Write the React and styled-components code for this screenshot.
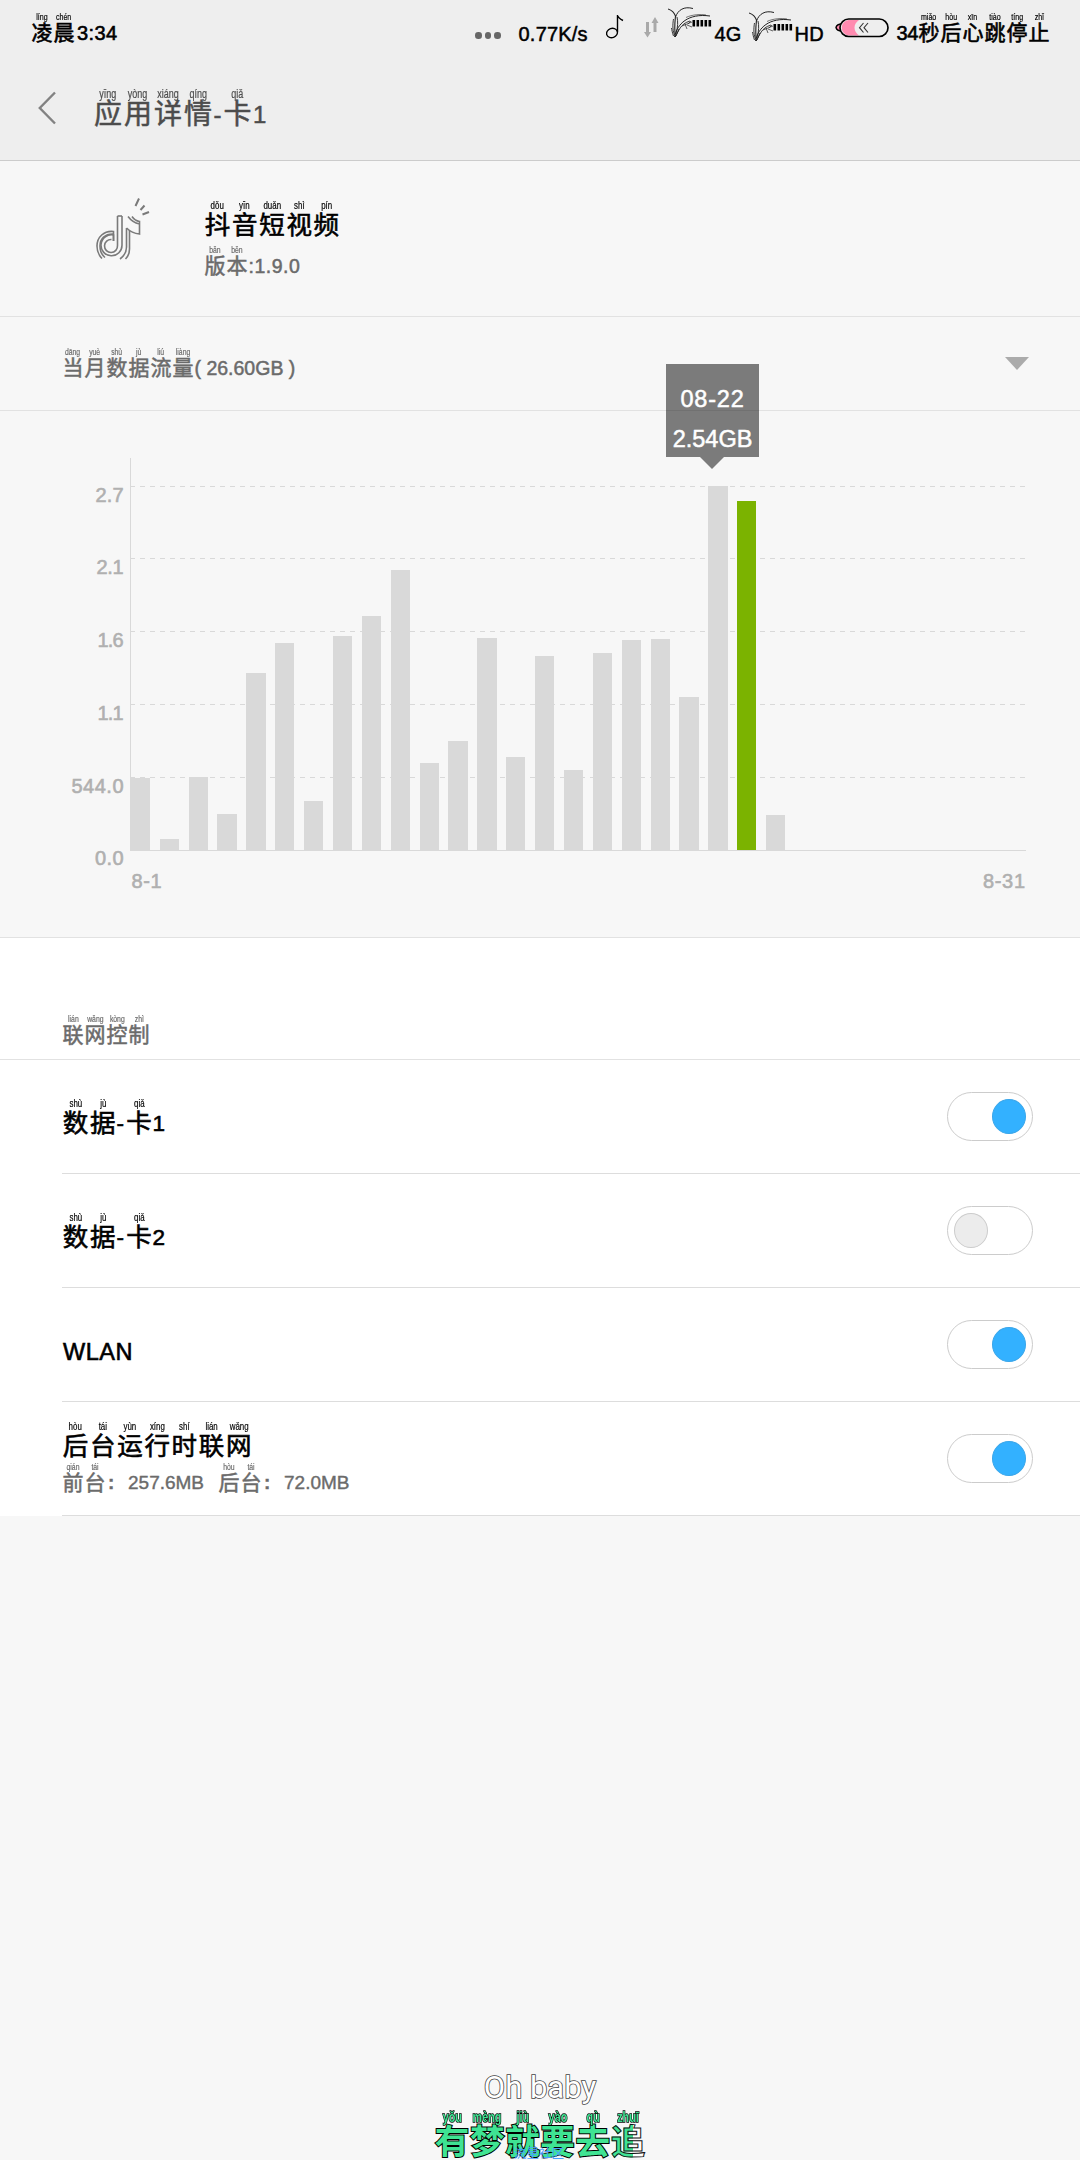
import React, {useState} from 'react';
import styled, {createGlobalStyle} from 'styled-components';

const usage = [72,11,73,36,177,207,49,214,234,280,87,109,212,93,194,80,197,210,211,153,364,349,35];
const selectedDay = 21;

const levels = [
    {y: 75, label: '2.7', width: 28},
    {y: 147, label: '2.1', width: 27},
    {y: 220, label: '1.6', width: 26},
    {y: 293, label: '1.1', width: 26},
    {y: 366, label: '544.0', width: 52},
];

// a string is plain latin text, a pair is [character, pinyin]
const Pinyin = ({text, ...style}) => (
    <Line>
        {text.map((part, idx) => typeof part === 'string'
            ? <Latin key={idx} {...style}>{part}</Latin>
            : <Cell key={idx} {...style}>
                <Tone {...style}>{part[1]}</Tone>
                <Hanzi {...style}>{part[0]}</Hanzi>
            </Cell>
        )}
    </Line>
);

const Grass = () => (
    <svg width="45" height="33" viewBox="0 0 45 33" fill="none" stroke="#222">
        <path d="M7.5 30C6 22 7 14 7.5 9C6 5 3 3 0 2" strokeWidth="1.1"/>
        <path d="M7.5 10C10 3 16-1 25 1.5" strokeWidth="1"/>
        <path d="M6.5 30C9 17 20 6 42 9" strokeWidth="1"/>
        <path d="M18 10.5C24 7.5 33 7 38 8" strokeWidth=".6"/>
        <path d="M7 30C11 24 12 17 22 14" strokeWidth=".9"/>
        <path d="M6.5 28C4 22 5 15 5.5 12M8 27C10 20 10 14 9 10M5.5 29C4 25 4 23 3.5 21M8 29L11 22" strokeWidth=".9"/>
        <path d="M14 19L24 15M17 17L19 22M19 18L24 20M20 17L23 14" strokeWidth=".7"/>
        <path d="M25.8 13V19.5M29.8 13V19.5M33.8 13V19.5M37.8 13V19.5M41.8 13V19.5" stroke="#000" strokeWidth="2.6"/>
    </svg>
);

const NoteIcon = () => (
    <svg width="18" height="26" viewBox="0 0 18 26" fill="none" stroke="#000" strokeWidth="1.4">
        <ellipse cx="6" cy="19" rx="5.5" ry="4.6" transform="rotate(-20 6 19)"/>
        <path d="M11.5 18V1C12 4 14 5 17 6.5"/>
    </svg>
);

const Arrows = () => (
    <svg width="15" height="22" viewBox="0 0 15 22" fill="#a9a9a9">
        <path d="M2 5H5V15H7L3.5 20.5L0 15H2Z"/>
        <path d="M9.5 15H12.5V6H14.5L11 0L7.5 6H9.5Z"/>
    </svg>
);

const Battery = () => (
    <svg width="54" height="20" viewBox="0 0 54 20">
        <path d="M7 6C4 6 1.5 7 1 9.5C1.5 12 4 13 7 13Z" fill="#ff8bb0" stroke="#000" strokeWidth="1.4"/>
        <rect x="5" y="1" width="48" height="17.5" rx="8.7" fill="#eee"/>
        <path d="M13.7 2H24C18 6 18 13 24 17.5H13.7A7.8 7.8 0 0 1 13.7 2Z" fill="#ff8bb0"/>
        <rect x="5" y="1" width="48" height="17.5" rx="8.7" fill="none" stroke="#000" strokeWidth="1.7"/>
        <path d="M28.5 5L24.5 9.7L28.5 14.5M33 5L29 9.7L33 14.5" fill="none" stroke="#333" strokeWidth="1.1"/>
    </svg>
);

const DouyinIcon = () => (
    <svg width="54" height="64" viewBox="0 0 54 64" fill="none" stroke="#7a7a7a">
        <g strokeWidth="1.6">
            <path d="M21.5 18V47.5A6.5 6.5 0 1 1 15.5 41.5"/>
            <path d="M26 18V47A10.5 10.5 0 1 1 17.5 37V43"/>
            <path d="M17.5 43V33.5C8 32.5 1 39 1 48C1 53 3 57.5 6 60.5"/>
            <path d="M17.5 36C9 35.5 4 41 4 48C4 53 6 57 9 59.5"/>
            <path d="M30.5 30V49C30.5 54 28 58 24 61M33.5 33V51C33.5 55 32 58.5 29.5 61"/>
            <path d="M21.5 18H26"/>
            <path d="M30.5 30C34 33.5 38 35.5 43.5 36V26C39 25 35 22.5 32 18.5M36 18.5C38 21.5 40.5 23 43.5 23.5V26"/>
        </g>
        <path d="M39.5 8L43 0.5M44.5 12L48.5 7.5M46.5 16.5L53 14" strokeWidth="2"/>
    </svg>
);

const Chart = () => (
    <ChartSvg width="1080" height="526" viewBox="0 0 1080 526">
        <g stroke="#d9d9d9" shapeRendering="crispEdges">
            {levels.map(({y}) => <path key={y} d={`M130 ${y + .5}H1026`} strokeDasharray="5 5"/>)}
            <path d="M130.5 47V439M130 439.5H1026"/>
        </g>
        {usage.map((h, idx) => {
            const start = 131.24 + idx * 28.88;
            const x = Math.floor(start);
            return <rect key={idx} x={x} y={439 - h} width={Math.floor(start + 19.25) - x} height={h}
                fill={idx === selectedDay ? '#7bb300' : '#d9d9d9'}/>
        })}
        {levels.map(({y, label, width}) => (
            <text key={label} x={123.5 - width} y={y + 15.5} textLength={width}>{label}</text>
        ))}
        <text x="95" y="453.5" textLength="28.5">0.0</text>
        <text x="131.5" y="476.5" textLength="30">8-1</text>
        <text x="983" y="476.5" textLength="42">8-31</text>
    </ChartSvg>
);

const App = () => {
    const [checked, setChecked] = useState([true, false, true, true]);

    const toggle = (idx) => {
        setChecked(checked.map((v, i) => i === idx ? !v : v));
    };

    const data = [['数','shù'],['据','jù'],'-',['卡','qiǎ']];

    return <>
        <GlobalStyle/>
        <Wrap>
            <StatusBar>
                <Pinyin text={[['凌','líng'],['晨','chén'],'3:34']} {...statusText}/>
                <StatusRight>
                    <Dots><i/><i/><i/></Dots>
                    <StatusText $width={71} $left={18}>0.77K/s</StatusText>
                    <Icon $left={16} $top={14}><NoteIcon/></Icon>
                    <Icon $left={20} $top={17}><Arrows/></Icon>
                    <Icon $left={9} $top={7}><Grass/></Icon>
                    <StatusText $width={25} $left={2}>4G</StatusText>
                    <Icon $left={9} $top={11}><Grass/></Icon>
                    <StatusText $width={27} $left={1}>HD</StatusText>
                    <Icon $left={13} $top={18}><Battery/></Icon>
                    <Countdown>
                        <Pinyin text={['34',['秒','miǎo'],['后','hòu'],['心','xīn'],['跳','tiào'],['停','tíng'],['止','zhǐ']]} {...statusText} $pad={0} $ls={-.4}/>
                    </Countdown>
                </StatusRight>
            </StatusBar>
            <TitleBar>
                <svg width="19" height="34" viewBox="0 0 19 34" fill="none" stroke="#828282" strokeWidth="2.4">
                    <path d="M17 1.5L1.8 17L17 32.5"/>
                </svg>
                <Title>
                    <Pinyin text={[['应','yīng'],['用','yòng'],['详','xiáng'],['情','qíng'],'-',['卡','qiǎ'],'1']} {...titleText}/>
                </Title>
            </TitleBar>
            <AppInfo>
                <DouyinIcon/>
                <AppName>
                    <Pinyin text={[['抖','dǒu'],['音','yīn'],['短','duǎn'],['视','shì'],['频','pín']]} {...nameText}/>
                    <Pinyin text={[['版','bǎn'],['本','běn'],':1.9.0']} {...smallText} $ls={.5}/>
                </AppName>
            </AppInfo>
            <Month>
                <Pinyin text={[['当','dāng'],['月','yuè'],['数','shù'],['据','jù'],['流','liú'],['量','liàng'],'( 26.60GB )']} {...smallText}/>
                <svg width="24" height="13" viewBox="0 0 24 13"><path d="M0 0H24L12 13Z" fill="#ababab"/></svg>
            </Month>
            <ChartBox>
                <Chart/>
                <Tooltip>
                    <span>08-22</span>
                    <span>2.54GB</span>
                </Tooltip>
            </ChartBox>
            <Control>
                <SectionTitle>
                    <Pinyin text={[['联','lián'],['网','wǎng'],['控','kòng'],['制','zhì']]} {...smallText}/>
                </SectionTitle>
                <Row>
                    <Pinyin text={[...data,'1']} {...nameText}/>
                    <Switch $on={checked[0]} onClick={()=>toggle(0)}/>
                </Row>
                <Row>
                    <Pinyin text={[...data,'2']} {...nameText}/>
                    <Switch $on={checked[1]} onClick={()=>toggle(1)}/>
                </Row>
                <Row>
                    <Wlan>WLAN</Wlan>
                    <Switch $on={checked[2]} onClick={()=>toggle(2)}/>
                </Row>
                <Row>
                    <Background>
                        <Pinyin text={[['后','hòu'],['台','tái'],['运','yùn'],['行','xíng'],['时','shí'],['联','lián'],['网','wǎng']]} {...nameText}/>
                        <SubLine>
                            <Pinyin text={[['前','qián'],['台','tái']]} {...smallText}/>
                            <Amount $width={112}><b>:</b>257.6MB</Amount>
                            <Pinyin text={[['后','hòu'],['台','tái']]} {...smallText}/>
                            <Amount><b>:</b>72.0MB</Amount>
                        </SubLine>
                    </Background>
                    <Switch $on={checked[3]} onClick={()=>toggle(3)}/>
                </Row>
            </Control>
            <Lyrics>
                <Sung>Oh baby</Sung>
                <Singing>
                    <Pinyin text={[['有','yǒu'],['梦','mèng'],['就','jiù'],['要','yào'],['去','qù']]} {...lyricText}/>
                    <LastWord>
                        <Pinyin text={[['追','zhuī']]} {...lyricText}/>
                    </LastWord>
                </Singing>
                <Community>流星社区</Community>
            </Lyrics>
        </Wrap>
    </>
}

export default App;

const statusText = {$size: 21, $pitch: 22, $height: 22, $toneHeight: 10, $tone: 9.8, $latin: 20, $pad: 2, $color: '#000', $stroke: .6, $ls: .4};
const titleText = {$size: 28, $pitch: 30, $height: 30, $toneHeight: 12, $tone: 12.5, $latin: 24, $pad: .5, $color: '#4c4c4c', $stroke: .5, $ls: 1};
const nameText = {$size: 25.5, $pitch: 27.2, $height: 27, $toneHeight: 13, $tone: 11, $latin: 22.5, $pad: 0, $color: '#000', $stroke: .6, $ls: 1.5};
const smallText = {$size: 21, $pitch: 22, $height: 22, $toneHeight: 10, $tone: 9.5, $latin: 19.5, $pad: .5, $color: '#6b6b6b', $stroke: .5, $ls: 0};
const lyricText = {$size: 34.5, $pitch: 35.2, $height: 36, $toneHeight: 14, $tone: 15, $latin: 30, $color: '#3fe393', $stroke: 0, $ls: 0, $outline: true};

const GlobalStyle = createGlobalStyle`
    body{
      margin: 0;
      background-color: #f7f7f7;
      font-family: "Liberation Sans", "Noto Sans CJK SC", sans-serif;
    }
    svg{
      display: block;
      flex-shrink: 0;
    }
`

const Wrap = styled.div`
    position: relative;
    width: 1080px;
    height: 2160px;
    overflow: hidden;
    background-color: #f7f7f7;
`

const Line = styled.div`
    display: flex;
    align-items: flex-end;
    white-space: pre;
`

const Latin = styled.span`
    font-size: ${p => p.$latin}px;
    line-height: ${p => p.$height}px;
    padding-left: ${p => p.$pad}px;
    letter-spacing: ${p => p.$ls}px;
    color: ${p => p.$color};
    -webkit-text-stroke: ${p => p.$stroke}px ${p => p.$color};
`

const Cell = styled.span`
    display: flex;
    flex-direction: column;
    align-items: center;
    width: ${p => p.$pitch}px;
`

const Tone = styled.span`
    font-size: ${p => p.$tone}px;
    line-height: ${p => p.$toneHeight}px;
    color: ${p => p.$color};
    transform: scaleX(.72);
    -webkit-text-stroke: .2px ${p => p.$color};
    ${p => p.$outline && `
      font-weight: bold;
      -webkit-text-stroke: 1.6px #000;
      paint-order: stroke fill;
    `}
`

const Hanzi = styled.span`
    font-size: ${p => p.$size}px;
    line-height: ${p => p.$height}px;
    color: ${p => p.$color};
    -webkit-text-stroke: ${p => p.$stroke}px ${p => p.$color};
    ${p => p.$outline && `
      font-weight: bold;
      -webkit-text-stroke: 2px #000;
      paint-order: stroke fill;
    `}
`

const StatusBar = styled.div`
    display: flex;
    justify-content: space-between;
    align-items: flex-start;
    box-sizing: border-box;
    height: 60px;
    padding: 0 30px 0 31px;
    background-color: #eee;
    > div:first-child{
      margin-top: 12px;
    }
`

const StatusRight = styled.div`
    display: flex;
    align-items: flex-start;
`

const Dots = styled.div`
    display: flex;
    gap: 3px;
    margin-top: 32px;
    i{
      width: 6.5px;
      height: 6.5px;
      border-radius: 50%;
      background-color: #666;
    }
`

const StatusText = styled.div`
    width: ${p => p.$width}px;
    margin-left: ${p => p.$left}px;
    margin-top: 23px;
    font-size: 20px;
    line-height: 22px;
    letter-spacing: .2px;
    -webkit-text-stroke: .5px #000;
`

const Icon = styled.div`
    margin-left: ${p => p.$left}px;
    margin-top: ${p => p.$top}px;
`

const Countdown = styled.div`
    margin-left: 8px;
    margin-top: 12px;
`

const TitleBar = styled.div`
    display: flex;
    align-items: flex-start;
    box-sizing: border-box;
    height: 101px;
    padding: 31px 38px 0;
    background-color: #eee;
    border-bottom: 1px solid #ccc;
`

const Title = styled.div`
    margin-left: 36px;
    margin-top: -3px;
`

const AppInfo = styled.div`
    display: flex;
    align-items: flex-start;
    box-sizing: border-box;
    height: 156px;
    padding: 37px 96px 0;
    border-bottom: 1px solid #e2e2e2;
`

const AppName = styled.div`
    display: flex;
    flex-direction: column;
    gap: 6px;
    margin-left: 54px;
    padding-top: 1px;
`

const Month = styled.div`
    display: flex;
    justify-content: space-between;
    align-items: flex-start;
    box-sizing: border-box;
    height: 94px;
    padding: 30px 51px 0 62px;
    border-bottom: 1px solid #e2e2e2;
    > svg{
      margin-top: 10px;
    }
`

const ChartBox = styled.div`
    position: relative;
    height: 526px;
    border-bottom: 1px solid #e2e2e2;
`

const ChartSvg = styled.svg`
    text{
      font-size: 20px;
      fill: #b0b0b0;
      stroke: #b0b0b0;
      stroke-width: .6px;
    }
`

const Tooltip = styled.div`
    position: absolute;
    left: 666px;
    top: -47px;
    display: flex;
    flex-direction: column;
    align-items: center;
    box-sizing: border-box;
    width: 93px;
    height: 93px;
    padding-top: 15px;
    background-color: rgba(0, 0, 0, .5);
    color: #fff;
    font-size: 23.5px;
    line-height: 40px;
    -webkit-text-stroke: .5px #fff;
    span:first-child{
      letter-spacing: .8px;
    }
    &::after{
      content: '';
      position: absolute;
      top: 93px;
      left: 34px;
      border: 12px solid transparent;
      border-top-color: rgba(0, 0, 0, .5);
      border-bottom: none;
    }
`

const Control = styled.div`
    background-color: #fff;
`

const SectionTitle = styled.div`
    box-sizing: border-box;
    height: 122px;
    padding: 76px 0 0 62px;
    border-bottom: 1px solid #e2e2e2;
`

const Row = styled.div`
    display: flex;
    justify-content: space-between;
    align-items: center;
    box-sizing: border-box;
    height: 114px;
    margin-left: 62px;
    padding-right: 47px;
    border-bottom: 1px solid #ddd;
`

const Switch = styled.button`
    box-sizing: border-box;
    display: flex;
    align-items: center;
    justify-content: ${p => p.$on ? 'flex-end' : 'flex-start'};
    width: 86px;
    height: 49px;
    padding: 0 6px;
    border: 1px solid #ccc;
    border-radius: 25px;
    background-color: #fff;
    &::after{
      content: '';
      box-sizing: border-box;
      width: 34px;
      height: 35px;
      border-radius: 50%;
      border: 1px solid ${p => p.$on ? '#3aa6ea' : '#ccc'};
      background-color: ${p => p.$on ? '#33b1ff' : '#ececec'};
    }
`

const Wlan = styled.div`
    margin-top: 14px;
    padding-left: 1px;
    font-size: 23.5px;
    line-height: 28px;
    letter-spacing: .5px;
    -webkit-text-stroke: .6px #000;
`

const Background = styled.div`
    display: flex;
    flex-direction: column;
    gap: 2px;
    padding-bottom: 3px;
`

const SubLine = styled.div`
    display: flex;
    align-items: flex-end;
`

const Amount = styled.div`
    width: ${p => p.$width ? p.$width + 'px' : 'auto'};
    font-size: 19px;
    line-height: 22px;
    color: #6b6b6b;
    -webkit-text-stroke: .4px #6b6b6b;
    b{
      display: inline-block;
      box-sizing: border-box;
      width: 22px;
      padding-left: 2px;
    }
`

// floating desktop lyrics, cut by the bottom edge of the screen
const Lyrics = styled.div`
    position: absolute;
    left: 434px;
    top: 2068px;
    width: 212px;
    display: flex;
    flex-direction: column;
    align-items: center;
`

const Sung = styled.div`
    height: 42px;
    font-family: Roboto, sans-serif;
    font-size: 31px;
    line-height: 40px;
    color: #fff;
    -webkit-text-stroke: 1.6px #444;
    paint-order: stroke fill;
`

const Singing = styled.div`
    display: flex;
`

const LastWord = styled.div`
    span > span:last-child{
      color: transparent;
      background: linear-gradient(90deg, #3fe393 66%, #fff 66%);
      background-clip: text;
      -webkit-text-stroke: 1px #111;
      paint-order: normal;
    }
`

const Community = styled.div`
    position: absolute;
    top: 79px;
    left: 80px;
    font-size: 12.5px;
    line-height: 14px;
    color: #4a9fff;
`
